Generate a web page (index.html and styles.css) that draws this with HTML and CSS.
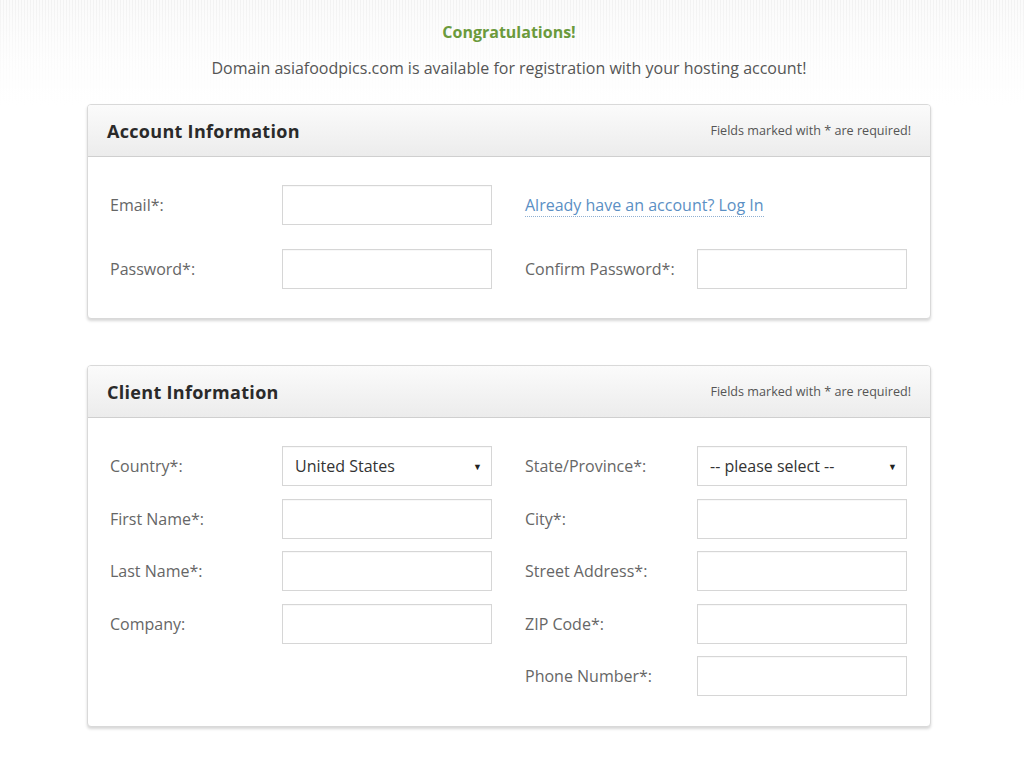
FILE: index.html
```html
<!DOCTYPE html>
<html>
<head>
<meta charset="utf-8">
<link rel="stylesheet" href="styles.css">
</head>
<body>
<div class="page">
  <div class="intro">
    <h1 class="congrats">Congratulations!</h1>
    <p class="avail">Domain asiafoodpics.com is available for registration with your hosting account!</p>
  </div>

  <section class="panel">
    <div class="panel-head">
      <h2>Account Information</h2>
      <span class="req">Fields marked with * are required!</span>
    </div>
    <div class="panel-body acct">
      <label class="lbl">Email*:</label>
      <div class="inp"></div>
      <div class="login-cell"><a class="login" href="#">Already have an account? Log In</a></div>
      <label class="lbl">Password*:</label>
      <div class="inp"></div>
      <label class="lbl right">Confirm Password*:</label>
      <div class="inp"></div>
    </div>
  </section>

  <section class="panel">
    <div class="panel-head">
      <h2>Client Information</h2>
      <span class="req">Fields marked with * are required!</span>
    </div>
    <div class="panel-body client">
      <label class="lbl">Country*:</label>
      <div class="inp sel"><span>United States</span><span class="arrow">&#9660;</span></div>
      <label class="lbl right">State/Province*:</label>
      <div class="inp sel"><span>-- please select --</span><span class="arrow">&#9660;</span></div>

      <label class="lbl">First Name*:</label>
      <div class="inp"></div>
      <label class="lbl right">City*:</label>
      <div class="inp"></div>

      <label class="lbl">Last Name*:</label>
      <div class="inp"></div>
      <label class="lbl right">Street Address*:</label>
      <div class="inp"></div>

      <label class="lbl">Company:</label>
      <div class="inp"></div>
      <label class="lbl right">ZIP Code*:</label>
      <div class="inp"></div>

      <label class="lbl right phone">Phone Number*:</label>
      <div class="inp"></div>
    </div>
  </section>
</div>
</body>
</html>
```

FILE: styles.css
```css
* { box-sizing: border-box; }
html, body { margin: 0; padding: 0; }
body {
  font-family: "Open Sans", "Liberation Sans", sans-serif;
  color: #666;
  background:
    linear-gradient(to bottom, rgba(255,255,255,0) 0, rgba(255,255,255,0.6) 50px, #fff 105px),
    repeating-linear-gradient(90deg, #f2f2f2 0 1px, #fbfbfb 1px 3px);
  background-repeat: no-repeat;
  background-size: 100% 110px;
  background-color: #fff;
  min-height: 762px;
}
.page {
  width: 844px;
  margin-left: 87px;
  padding-top: 19px;
}
.intro { text-align: center; }
.congrats {
  margin: 0;
  font-size: 16px;
  font-weight: 700;
  color: #6b9a3c;
  line-height: 26px;
}
.avail {
  margin: 10px 0 0;
  font-size: 16px;
  color: #555;
  line-height: 26px;
}
.panel {
  margin-top: 23px;
  border: 1px solid #d9d9d9;
  border-radius: 4px;
  background: #fff;
  box-shadow: 0 2px 3px rgba(0,0,0,0.16);
  overflow: hidden;
}
.panel + .panel { margin-top: 46px; }
.panel-head {
  height: 52px;
  display: flex;
  align-items: center;
  justify-content: space-between;
  padding: 0 19px 0 19px;
  background: linear-gradient(to bottom, #fbfbfb, #ececec);
  border-bottom: 1px solid #cfcfcf;
}
.panel-head h2 {
  margin: 0;
  font-size: 18px;
  font-weight: 700;
  color: #2a2a2a;
  letter-spacing: 0.3px;
}
.req {
  font-size: 12.6px;
  color: #555;
}
.panel-body {
  display: grid;
  grid-template-columns: 172px 210px 205px 210px;
  padding: 28px 23px 29px 22px;
  align-items: center;
}
.panel-body.acct { row-gap: 24px; }
.panel-body.client { row-gap: 12.5px; padding-bottom: 30px; }
.lbl {
  font-size: 16px;
  color: #666;
  line-height: 22px;
}
.lbl.right { padding-left: 33px; }
.lbl.phone { grid-column: 3; }
.inp {
  height: 40px;
  border: 1px solid #d6d6d6;
  background: #fff;
  box-shadow: inset 0 1px 1px rgba(0,0,0,0.03);
}
.sel {
  display: flex;
  align-items: center;
  justify-content: space-between;
  padding: 0 9px 0 12px;
  font-size: 16px;
  color: #333;
}
.arrow { font-size: 9px; color: #222; }
.login-cell {
  grid-column: 3 / span 2;
  padding-left: 33px;
}
.login {
  font-size: 16px;
  color: #5b8fc4;
  text-decoration: none;
  border-bottom: 1px dotted #8fb0d2;
  line-height: 20px;
}
```
